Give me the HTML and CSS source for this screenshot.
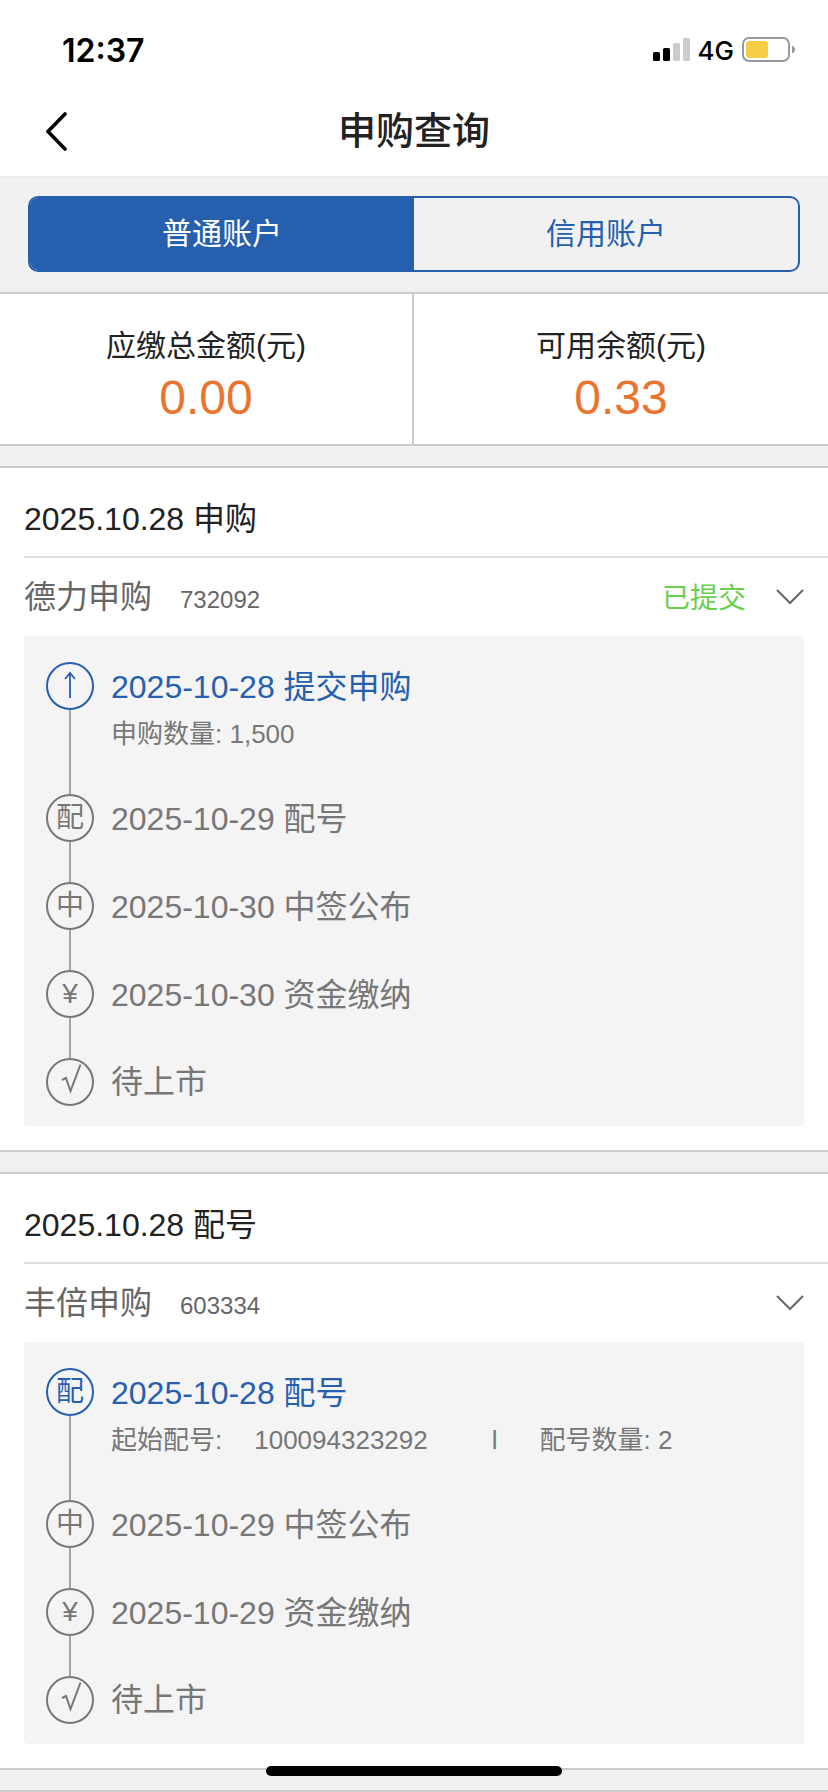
FILE: index.html
```
<!DOCTYPE html>
<html lang="zh-CN">
<head>
  <meta charset="UTF-8">
  <meta name="viewport" content="width=device-width, initial-scale=1">
  <title>申购查询</title>
  <link rel="stylesheet" href="styles.css">
</head>
<body>

  <div class="status-bar">
    <span class="time">12:37</span>
    <div class="status-right">
      <svg width="37" height="24" viewBox="0 0 37 24" aria-hidden="true">
        <rect x="0" y="14" width="7" height="9" rx="1.500" fill="#000"/>
        <rect x="10" y="10" width="7" height="13" rx="1.500" fill="#000"/>
        <rect x="20" y="5" width="7" height="18" rx="1.500" fill="#ccc"/>
        <rect x="30" y="0" width="7" height="23" rx="1.500" fill="#ccc"/>
      </svg>
      <span class="network">4G</span>
      <svg width="54" height="26" viewBox="0 0 54 26" aria-hidden="true">
        <rect x="1" y="1" width="46" height="23" rx="6" fill="none" stroke="#999" stroke-width="2"/>
        <rect x="4" y="4" width="22" height="17" rx="3" fill="#f7ce46"/>
        <path d="M50 8.500c4 1.500 4 6.500 0 8z" fill="#999"/>
      </svg>
    </div>
  </div>

  <header class="nav">
    <button class="back" type="button" aria-label="返回">
      <svg width="24" height="40" viewBox="0 0 24 40"><path d="M19 2 2 19.500 19 37" fill="none" stroke="#000" stroke-width="3.600" stroke-linecap="round"/></svg>
    </button>
    <h1>申购查询</h1>
  </header>

  <main>
    <div class="tabs">
      <button class="tab active" type="button">普通账户</button>
      <button class="tab" type="button">信用账户</button>
    </div>

    <section class="summary">
      <div class="summary-cell">
        <span class="label">应缴总金额(元)</span>
        <span class="amount">0.00</span>
      </div>
      <div class="summary-cell">
        <span class="label">可用余额(元)</span>
        <span class="amount">0.33</span>
      </div>
    </section>

    <section class="card">
      <h2>2025.10.28 申购</h2>
      <div class="stock">
        <span class="name">德力申购</span>
        <span class="code">732092</span>
        <span class="state">已提交</span>
        <button class="toggle" type="button" aria-label="收起">
          <svg width="28" height="16" viewBox="0 0 28 16"><path d="M1 1 14 14 27 1" fill="none" stroke="#666" stroke-width="2"/></svg>
        </button>
      </div>
      <ol class="timeline">
        <li class="step current">
          <div class="marker"><span class="dot"><svg width="48" height="48" viewBox="0 0 48 48"><path d="M24 36V11M19 17l5-6 5 6" fill="none" stroke="currentColor" stroke-width="1.800"/></svg></span></div>
          <div class="info">
            <p class="title">2025-10-28 提交申购</p>
            <p class="detail">申购数量: 1,500</p>
          </div>
        </li>
        <li class="step">
          <div class="marker"><span class="dot">配</span></div>
          <p class="title">2025-10-29 配号</p>
        </li>
        <li class="step">
          <div class="marker"><span class="dot">中</span></div>
          <p class="title">2025-10-30 中签公布</p>
        </li>
        <li class="step">
          <div class="marker"><span class="dot">¥</span></div>
          <p class="title">2025-10-30 资金缴纳</p>
        </li>
        <li class="step">
          <div class="marker"><span class="dot"><svg width="48" height="48" viewBox="0 0 48 48"><path d="M16 22l4-2 4.500 13L34.500 6.500" fill="none" stroke="currentColor" stroke-width="2"/></svg></span></div>
          <p class="title">待上市</p>
        </li>
      </ol>
    </section>

    <section class="card">
      <h2>2025.10.28 配号</h2>
      <div class="stock">
        <span class="name">丰倍申购</span>
        <span class="code">603334</span>
        <button class="toggle" type="button" aria-label="收起">
          <svg width="28" height="16" viewBox="0 0 28 16"><path d="M1 1 14 14 27 1" fill="none" stroke="#666" stroke-width="2"/></svg>
        </button>
      </div>
      <ol class="timeline">
        <li class="step current">
          <div class="marker"><span class="dot">配</span></div>
          <div class="info">
            <p class="title">2025-10-28 配号</p>
            <p class="detail">
              <span>起始配号:</span>
              <span class="number">100094323292</span>
              <span class="bar">l</span>
              <span>配号数量: 2</span>
            </p>
          </div>
        </li>
        <li class="step">
          <div class="marker"><span class="dot">中</span></div>
          <p class="title">2025-10-29 中签公布</p>
        </li>
        <li class="step">
          <div class="marker"><span class="dot">¥</span></div>
          <p class="title">2025-10-29 资金缴纳</p>
        </li>
        <li class="step">
          <div class="marker"><span class="dot"><svg width="48" height="48" viewBox="0 0 48 48"><path d="M16 22l4-2 4.500 13L34.500 6.500" fill="none" stroke="currentColor" stroke-width="2"/></svg></span></div>
          <p class="title">待上市</p>
        </li>
      </ol>
    </section>

    <section class="card next"></section>
  </main>

  <div class="home-indicator"></div>

</body>
</html>
```
FILE: styles.css
```
* { box-sizing: border-box; margin: 0; padding: 0; }
body {
  background: #f1f1f1;
  color: #222;
  font-family: "Liberation Sans", "Noto Sans CJK SC", sans-serif;
  font-size: 32px;
  overflow: hidden;
}
button { font: inherit; color: inherit; background: none; border: none; cursor: pointer; }
svg { display: block; }

/* status bar */
.status-bar {
  display: flex; justify-content: space-between; align-items: center;
  height: 88px; padding: 12px 32px 0 62px;
  background: #fff; color: #000; font-family: Inter, sans-serif;
}
.time { font-size: 32px; font-weight: 600; }
.status-right { display: flex; align-items: center; gap: 8px; }
.network { font-size: 26px; font-weight: 500; }

/* title bar */
.nav {
  display: grid; grid-template-columns: 88px 1fr 88px; align-items: center;
  height: 90px; background: #fff; border-bottom: 2px solid #ececec;
}
.back { padding-left: 46px; }
.nav h1 { font-size: 38px; font-weight: 500; line-height: 56px; padding-bottom: 2px; text-align: center; }

/* account tabs */
.tabs { display: flex; margin: 18px 28px 20px; border: 2px solid #265fae; border-radius: 10px; overflow: hidden; }
.tab { flex: 1; height: 72px; font-size: 30px; line-height: 72px; color: #265fae; }
.tab.active { background: #265fae; color: #fff; }

/* totals */
.summary { display: flex; background: #fff; border-top: 2px solid #ccc; border-bottom: 2px solid #ccc; }
.summary-cell { width: 50%; display: flex; flex-direction: column; align-items: center; height: 150px; padding-top: 30px; }
.summary-cell:first-child { border-right: 2px solid #ccc; }
.label { font-size: 30px; line-height: 44px; }
.amount { font-size: 48px; line-height: 60px; color: #e97430; }

/* cards */
.card { margin-top: 20px; padding: 0 24px 24px; background: #fff; border-top: 2px solid #ccc; border-bottom: 2px solid #ccc; }
.card.next { padding: 24px; }
.card h2 {
  margin-right: -24px; padding: 27px 0 13px;
  font-size: 32px; font-weight: 400; line-height: 48px;
  border-bottom: 2px solid #ddd;
}
.stock { display: flex; align-items: baseline; height: 78px; line-height: 78px; color: #666; }
.name { margin-right: 28px; }
.code { font-size: 24px; }
.state { margin-left: auto; font-size: 28px; color: #67d04f; }
.toggle { align-self: center; margin-left: 30px; }
.code + .toggle { margin-left: auto; }

/* progress timeline */
.timeline { padding: 26px 22px 20px; list-style: none; background: #f4f4f4; border-radius: 4px; color: #777; }
.step { display: flex; gap: 17px; min-height: 88px; }
.step.current { min-height: 132px; }
.step:last-child { min-height: 48px; }
.marker { display: flex; flex-direction: column; align-items: center; }
.marker::after { content: ""; flex: 1; width: 2px; background: #a5a5a5; }
.dot {
  display: flex; align-items: center; justify-content: center;
  width: 48px; height: 48px; border: 2px solid #777; border-radius: 50%;
  font-size: 28px; line-height: 44px;
}
.dot svg { flex: none; }
.title { line-height: 50px; }
.current .title, .current .dot { color: #265fae; border-color: #265fae; }
.detail { display: flex; font-size: 26px; line-height: 44px; }
.number { margin-left: 32px; }
.bar { margin: 0 42px 0 64px; }
.step:last-child .title { line-height: 48px; }

.home-indicator {
  position: fixed; bottom: 16px; left: 50%; transform: translateX(-50%);
  width: 296px; height: 10px; border-radius: 5px; background: #000;
}
```
